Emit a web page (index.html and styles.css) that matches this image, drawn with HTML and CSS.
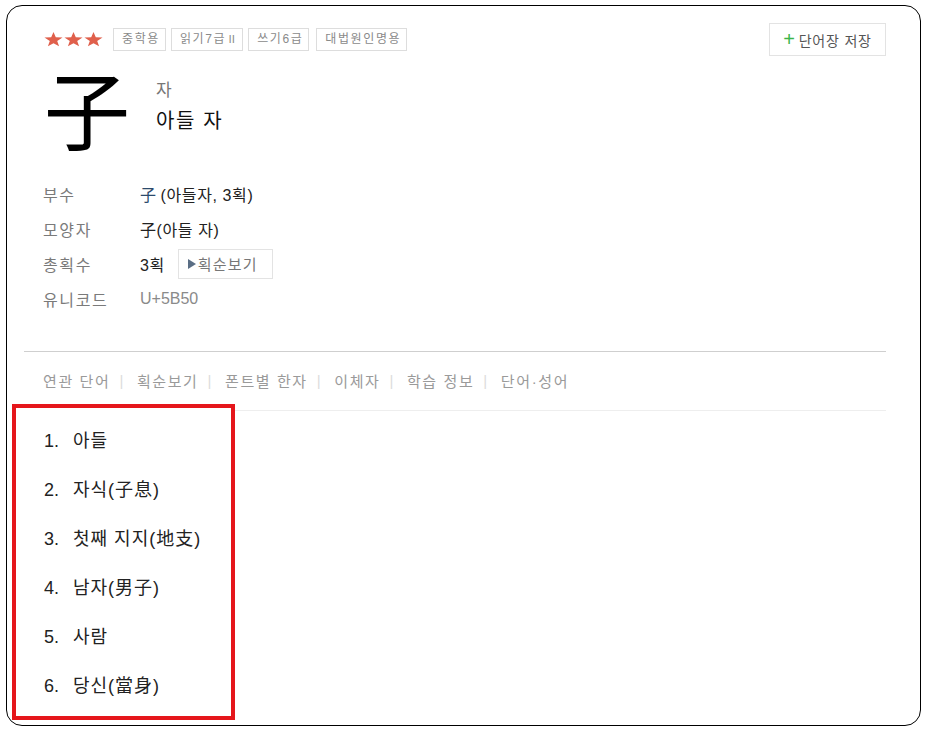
FILE: index.html
```html
<!DOCTYPE html>
<html lang="ko">
<head>
<meta charset="utf-8">
<title>子 - 아들 자</title>
<link rel="stylesheet" href="styles.css">
</head>
<body>
<div class="frame">
  <div class="content">
    <div class="top">
      <div class="badges">
        <span class="stars">
          <svg class="star" viewBox="0 0 18 17" preserveAspectRatio="none"><polygon points="9,0 11.18,6.01 17.56,6.22 12.52,10.14 14.29,16.28 9,12.7 3.71,16.28 5.48,10.14 0.44,6.22 6.82,6.01"/></svg>
          <svg class="star" viewBox="0 0 18 17" preserveAspectRatio="none"><polygon points="9,0 11.18,6.01 17.56,6.22 12.52,10.14 14.29,16.28 9,12.7 3.71,16.28 5.48,10.14 0.44,6.22 6.82,6.01"/></svg>
          <svg class="star" viewBox="0 0 18 17" preserveAspectRatio="none"><polygon points="9,0 11.18,6.01 17.56,6.22 12.52,10.14 14.29,16.28 9,12.7 3.71,16.28 5.48,10.14 0.44,6.22 6.82,6.01"/></svg>
        </span>
        <span class="tag">중학용</span>
        <span class="tag">읽기7급<span class="roman">Ⅱ</span></span>
        <span class="tag">쓰기6급</span>
        <span class="tag wide">대법원인명용</span>
      </div>
      <button class="save" type="button"><span class="plus">+</span>단어장 저장</button>
    </div>

    <div class="hanja">
      <div class="big">子</div>
      <div class="reading">
        <div class="sound">자</div>
        <div class="meaning">아들 자</div>
      </div>
    </div>

    <dl class="info">
      <div class="row"><dt>부수</dt><dd><span class="rad">子</span> (아들자, 3획)</dd></div>
      <div class="row"><dt>모양자</dt><dd>子(아들 자)</dd></div>
      <div class="row"><dt>총획수</dt><dd>3획 <span class="stroke-btn"><span class="tri"></span>획순보기</span></dd></div>
      <div class="row"><dt>유니코드</dt><dd class="muted">U+5B50</dd></div>
    </dl>
  </div>

  <div class="sep"></div>

  <nav class="tabs">
    <span>연관 단어</span><i>|</i>
    <span>획순보기</span><i>|</i>
    <span>폰트별 한자</span><i>|</i>
    <span>이체자</span><i>|</i>
    <span>학습 정보</span><i>|</i>
    <span>단어·성어</span>
  </nav>

  <div class="sep light"></div>

  <ol class="meanings">
    <li><span class="num">1.</span>아들</li>
    <li><span class="num">2.</span>자식(子息)</li>
    <li><span class="num">3.</span>첫째 지지(地支)</li>
    <li><span class="num">4.</span>남자(男子)</li>
    <li><span class="num">5.</span>사람</li>
    <li><span class="num">6.</span>당신(當身)</li>
  </ol>

  <div class="highlight"></div>
</div>
</body>
</html>
```

FILE: styles.css
```css
html, body {
  margin: 0;
  padding: 0;
  background: #fff;
}

body {
  font-family: "Liberation Sans", "Noto Sans CJK KR", sans-serif;
  color: #222;
}

.frame {
  position: relative;
  box-sizing: border-box;
  margin: 5px 0 0 6px;
  width: 915px;
  height: 721px;
  border: 1px solid #000;
  border-radius: 16px;
  overflow: hidden;
  background: #fff;
}

.content {
  padding: 17px 34px 0 36px;
}

.top {
  display: flex;
  justify-content: space-between;
  align-items: center;
}

.badges {
  display: flex;
  align-items: center;
  gap: 5px;
}

.stars {
  display: flex;
  gap: 1px;
  margin: 0 5px 0 1px;
}

.star {
  width: 19px;
  height: 15px;
  fill: #e0604c;
  display: block;
}

.tag {
  box-sizing: border-box;
  height: 23px;
  line-height: 21px;
  padding: 0 5px 0 8px;
  border: 1px solid #ddd;
  font-size: 12px;
  letter-spacing: 1.6px;
  color: #8a8a8a;
  white-space: nowrap;
}

.roman {
  font-size: 11px;
  letter-spacing: 0;
}

.tag.wide {
  margin-left: 2px;
}

.save {
  box-sizing: border-box;
  height: 33px;
  width: 117px;
  padding: 0;
  border: 1px solid #e3e3e3;
  background: #fff;
  font-family: "Liberation Sans", "Noto Sans CJK KR", sans-serif;
  font-size: 14px;
  letter-spacing: 0.8px;
  color: #555;
  display: flex;
  align-items: center;
  justify-content: center;
  gap: 3px;
}

.plus {
  color: #3bb54a;
  font-size: 20px;
  font-weight: normal;
  line-height: 1;
  margin-top: -2px;
}

.hanja {
  display: flex;
  align-items: flex-start;
  margin-top: 4px;
  height: 106px;
}

.big {
  font-family: "Noto Sans CJK KR", sans-serif;
  font-size: 86px;
  line-height: 94px;
  color: #000;
  width: 112px;
  margin-left: 1px;
}

.reading {
  padding-top: 17px;
}

.sound {
  font-family: "Noto Sans CJK KR", sans-serif;
  font-size: 17px;
  line-height: 24px;
  color: #777;
  letter-spacing: 1px;
}

.meaning {
  font-family: "Noto Sans CJK KR", sans-serif;
  font-size: 20px;
  line-height: 30px;
  color: #111;
  margin-top: 4px;
  letter-spacing: 1.6px;
}

.info {
  margin: 10px 0 0 0;
  padding: 0;
}

.row {
  display: flex;
  align-items: center;
  height: 35px;
  font-size: 16px;
  letter-spacing: 0.6px;
}

.row dt {
  width: 97px;
  color: #7a7a7a;
  letter-spacing: 1.6px;
}

.row dd {
  margin: 0;
  color: #222;
  display: flex;
  align-items: center;
  gap: 4px;
}

.rad {
  color: #2c4a6c;
}

.row dd.muted {
  color: #8a8a8a;
  letter-spacing: 0;
}

.stroke-btn {
  box-sizing: border-box;
  margin-left: 9px;
  height: 30px;
  width: 95px;
  padding: 0 0 0 9px;
  border: 1px solid #e3e3e3;
  color: #777;
  display: inline-flex;
  align-items: center;
  gap: 2px;
  font-size: 15px;
  letter-spacing: 1.2px;
}

.tri {
  width: 0;
  height: 0;
  border-left: 8px solid #5a6e85;
  border-top: 5px solid transparent;
  border-bottom: 5px solid transparent;
}

.sep {
  height: 1px;
  background: #cfcfcf;
  margin: 35px 34px 0 17px;
}

.sep.light {
  background: #eeeeee;
  margin: 0 34px 0 227px;
}

.tabs {
  display: flex;
  align-items: center;
  height: 58px;
  padding-left: 36px;
  padding-bottom: 1px;
  box-sizing: border-box;
  font-size: 15px;
  letter-spacing: 1.6px;
  color: #9a9a9a;
}

.tabs i {
  font-style: normal;
  color: #dcdcdc;
  margin: 0 12px 0 9px;
}

.meanings {
  list-style: none;
  margin: 0;
  padding: 6px 0 0 37px;
}

.meanings li {
  height: 49px;
  line-height: 49px;
  font-size: 18px;
  letter-spacing: 1px;
  color: #222;
}

.num {
  display: inline-block;
  width: 29px;
  letter-spacing: 0;
}

.highlight {
  position: absolute;
  left: 5px;
  top: 398px;
  width: 223px;
  height: 316px;
  box-sizing: border-box;
  border: 4px solid #e5161b;
  pointer-events: none;
}
```
